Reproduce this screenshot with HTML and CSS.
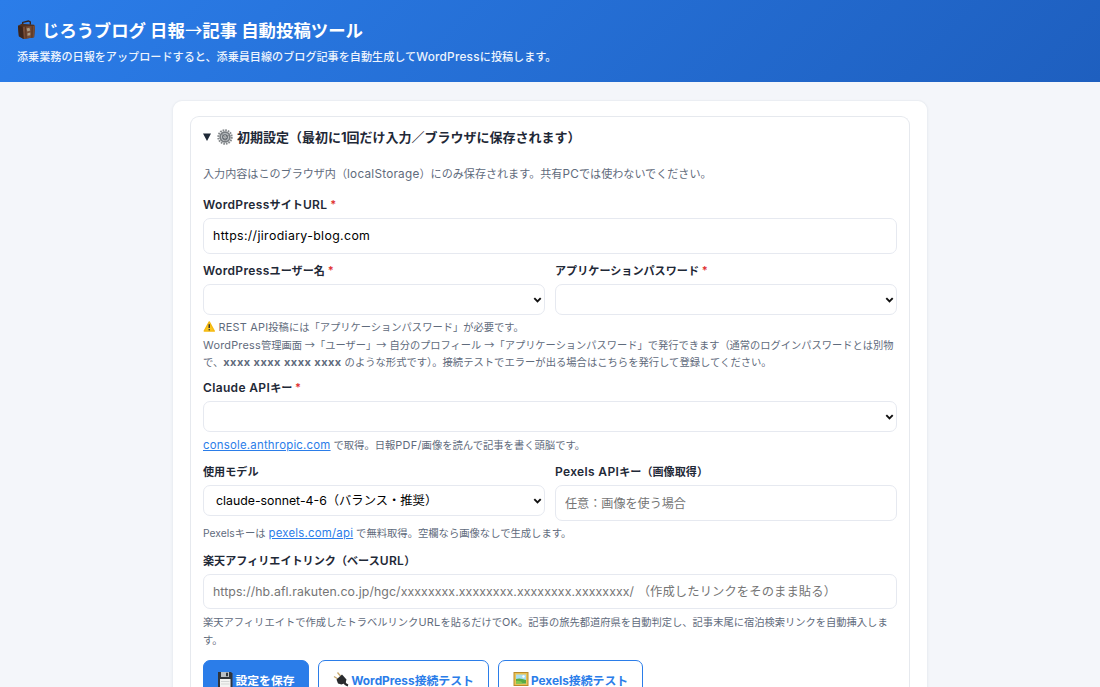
FILE: index.html
```html
<!DOCTYPE html>
<html lang="ja">
<head>
<meta charset="utf-8">
<title>じろうブログ 日報→記事 自動投稿ツール</title>
<link rel="stylesheet" href="styles.css">
</head>
<body>
<header class="header">
  <h1 class="title">
    <svg class="icon-bag" viewBox="0 0 20 22"><path d="M6 5V2.500L12 1l2 1v3" fill="none" stroke="#35211a" stroke-width="1.400"/><path d="M1 6l4-2 13 1 1 2-1 11-11 2-5-3z" fill="#50301f"/><path d="M6 7l13-1-1 12-11 2z" fill="#754a35"/><path d="M1 6l5 1 1 13-5-3z" fill="#3b241b"/><path d="M9 7l.6 12M16 6.500l-.3 12" stroke="#50301f" stroke-width="1"/><path d="M10 9l3-1 1 3-3 1zM11 14l3-1v3l-3 .5z" fill="#a99a82"/></svg>
    <span>じろうブログ 日報<span class="arrow">→</span>記事 自動投稿ツール</span>
  </h1>
  <p class="subtitle">添乗業務の日報をアップロードすると、添乗員目線のブログ記事を自動生成して<span class="en">WordPress</span>に投稿します。</p>
</header>
<main class="card">
  <section class="settings">
    <h2 class="summary">
      <svg class="icon-tri" viewBox="0 0 8 8"><path d="M0 .5h8L4 8z" fill="#1f2937"/></svg>
      <svg class="icon-gear" viewBox="0 0 16 16"><circle cx="8" cy="8" r="6.700" fill="none" stroke="#85898c" stroke-width="2" stroke-dasharray="1.700 .93"/><circle cx="8" cy="8" r="4.900" fill="#b9bdc0" stroke="#777c80" stroke-width="1.600"/><circle cx="8" cy="8" r="2.300" fill="#d9dcdf" stroke="#565e65" stroke-width="1.100"/><path d="M8 8l-3.500-3M8 8l4-1.500M8 8v4" stroke="#777" stroke-width=".7"/></svg>
      <span>初期設定（最初に1回だけ入力／ブラウザに保存されます）</span>
    </h2>
    <p class="intro">入力内容はこのブラウザ内（<span class="en">localStorage</span>）にのみ保存されます。共有<span class="en">PC</span>では使わないでください。</p>

    <div class="field">
      <label class="label"><span class="en">WordPress</span>サイト<span class="en">URL</span> <b class="req">*</b></label>
      <input class="input input-url" type="text" value="https://jirodiary-blog.com">
    </div>

    <div class="row row-users">
      <div class="field">
        <label class="label"><span class="en">WordPress</span>ユーザー名 <b class="req">*</b></label>
        <div class="select-box"><select class="select"><option></option></select><svg class="chevron" viewBox="0 0 8 6"><path d="M.8 1.200L4 4.500l3.200-3.300" /></svg></div>
      </div>
      <div class="field">
        <label class="label">アプリケーションパスワード <b class="req">*</b></label>
        <div class="select-box"><select class="select"><option></option></select><svg class="chevron" viewBox="0 0 8 6"><path d="M.8 1.200L4 4.500l3.200-3.300" /></svg></div>
      </div>
    </div>
    <p class="help help-rest"><span class="line line-note"><svg class="icon-warn" viewBox="0 0 13 12"><path d="M6.500 1L12 11H1z" fill="#fbc61d" stroke="#f5b912" stroke-width="1.500" stroke-linejoin="round"/><path d="M6.500 3.600v4" stroke="#333" stroke-width="1.600"/><circle cx="6.500" cy="9.500" r=".9" fill="#333"/></svg> <span class="en">REST API</span>投稿には「アプリケーションパスワード」が必要です。</span><span class="line line-path"><span class="en">WordPress</span>管理画面 <span class="arrow">→</span>「ユーザー」<span class="arrow">→</span> 自分のプロフィール <span class="arrow">→</span>「アプリケーションパスワード」で発行できます（通常のログインパスワードとは別物</span><span class="line">で、<b class="sample">xxxx xxxx xxxx xxxx</b> のような形式です）。接続テストでエラーが出る場合はこちらを発行して登録してください。</span></p>

    <div class="field">
      <label class="label"><span class="en">Claude API</span>キー <b class="req">*</b></label>
      <div class="select-box"><select class="select"><option></option></select><svg class="chevron" viewBox="0 0 8 6"><path d="M.8 1.200L4 4.500l3.200-3.300" /></svg></div>
    </div>
    <p class="help help-claude"><a class="link" href="#">console.anthropic.com</a> で取得。日報<span class="en">PDF/</span>画像を読んで記事を書く頭脳です。</p>

    <div class="row">
      <div class="field">
        <label class="label">使用モデル</label>
        <div class="select-box"><select class="select"><option>claude-sonnet-4-6（バランス・推奨）</option></select><svg class="chevron" viewBox="0 0 8 6"><path d="M.8 1.200L4 4.500l3.200-3.300" /></svg></div>
      </div>
      <div class="field">
        <label class="label"><span class="en">Pexels API</span>キー（画像取得）</label>
        <input class="input input-px" type="text" placeholder="任意：画像を使う場合">
      </div>
    </div>
    <p class="help help-pexels">Pexelsキーは <a class="link" href="#">pexels.com/api</a> で無料取得。空欄なら画像なしで生成します。</p>

    <div class="field">
      <label class="label">楽天アフィリエイトリンク（ベース<span class="en">URL</span>）</label>
      <input class="input input-rakuten" type="text" placeholder="https://hb.afl.rakuten.co.jp/hgc/xxxxxxxx.xxxxxxxx.xxxxxxxx.xxxxxxxx/ （作成したリンクをそのまま貼る）">
    </div>
    <p class="help help-rakuten"><span class="line line-rakuten">楽天アフィリエイトで作成したトラベルリンク<span class="en">URL</span>を貼るだけで<span class="en">OK</span>。記事の旅先都道府県を自動判定し、記事末尾に宿泊検索リンクを自動挿入しま</span><span class="line">す。</span></p>

    <div class="actions">
      <button class="btn btn-primary"><svg class="icon-btn" viewBox="0 0 16 16"><path d="M1 1h13l1.500 1.500V16H1z" fill="#30343a"/><path d="M4 1h8v5H4z" fill="#b9bec3"/><path d="M9 1.800h2v3.400H9z" fill="#34383d"/><path d="M3 8h10.500v8H3z" fill="#f4f4f2"/><path d="M4 10.500h8.500M4 13h8.500" stroke="#c6c9ca" stroke-width=".7"/></svg><span>設定を保存</span></button>
      <button class="btn btn-wp"><svg class="icon-btn" viewBox="0 0 16 16"><path d="M1 5.500l4 2.500M4.500 1.500L7.500 5" stroke="#c9a96c" stroke-width="1.300"/><path d="M3.500 8.500l5.500-5 4.500 5-1 3.500-4 1.500-3.500-1z" fill="#292b2e"/><path d="M11 11q1 2.500 4 3.500" stroke="#292b2e" stroke-width="2.200" fill="none"/></svg><span>WordPress接続テスト</span></button>
      <button class="btn btn-px"><svg class="icon-btn" viewBox="0 0 16 16"><path d="M.5 1h15v14H.5z" fill="#b98a2a"/><path d="M1.500 2h13v12h-13z" fill="#e9c255"/><path d="M3 3.500h10v9H3z" fill="#a8def0"/><path d="M3 8q4-1.500 10 1v3.500H3z" fill="#58ab45"/><path d="M3 10q5-1 7 2.500H3z" fill="#86c94d"/><circle cx="10.500" cy="5.500" r="1.200" fill="#fff"/></svg><span>Pexels接続テスト</span></button>
    </div>
  </section>
</main>
</body>
</html>
```
FILE: styles.css
```css
* { box-sizing: border-box; }
html { overflow: hidden; }
body {
  display: flex;
  flex-direction: column;
  margin: 0;
  height: 687px;
  overflow: hidden;
  background: #f4f6fa;
  color: #1f2937;
  font-family: Inter, "Noto Sans CJK JP", sans-serif;
  font-size: 11.4px;
  white-space: nowrap;
}
h1, h2, p { margin: 0; }
.en { font-size: 1.06em; letter-spacing: .25px; }
.arrow { font-family: "Noto Sans CJK JP", sans-serif; font-weight: 400; }

.header {
  flex: none;
  height: 82px;
  padding: 18px 17px 0;
  background: linear-gradient(135deg, #2b7de9, #1e5fbf);
  color: #fff;
}
.title { display: flex; align-items: center; gap: 6px; height: 24px; font-size: 17.4px; font-weight: 700; line-height: 24px; }
.icon-bag { width: 19px; height: 21px; }
.subtitle { margin-top: 6px; font-size: 11.120px; line-height: 18px; color: #edf4fd; font-weight: 500; }

.card {
  flex: 1;
  min-height: 0;
  width: 756px;
  margin: 18px auto 0;
  padding: 15px 17px 0;
  background: #fff;
  border: 1px solid #ebeef3;
  border-bottom: 0;
  border-radius: 10px 10px 0 0;
  box-shadow: 0 1px 3px rgba(30, 50, 80, .05);
  overflow: hidden;
}
.settings {
  height: 100%;
  padding: 9px 12px 0;
  border: 1px solid #e6e9ee;
  border-bottom: 0;
  border-radius: 9px 9px 0 0;
  overflow: hidden;
}
.summary { display: flex; align-items: center; height: 22px; font-size: 13px; line-height: 22px; font-weight: 700; }
.icon-tri { width: 8px; height: 8px; margin-right: 6px; }
.icon-gear { width: 16px; height: 16px; margin-right: 4px; }
.intro { margin: 17px 0 13px; height: 18px; font-size: 11.080px; line-height: 18px; color: #5f6b7c; }

.field { min-width: 0; }
.label { display: block; height: 22px; font-size: 11.100px; line-height: 18px; font-weight: 600; }
.label .en { font-size: 12px; letter-spacing: .35px; }
.req { color: #e03131; font-weight: 600; }
.input, .select {
  display: block;
  width: 100%;
  margin: 0;
  border: 1px solid #e6e9f0;
  border-radius: 7px;
  background: #fff;
  color: #000;
  font-family: inherit;
  font-size: 12.300px;
}
.input { height: 35.500px; padding: 0 9px; }
.input-url { letter-spacing: .37px; }
.input-px { font-size: 12.100px; }
.input-rakuten { letter-spacing: .1px; }
.input::placeholder { color: #757575; opacity: 1; }
.select { height: 31px; padding: 0 12px; appearance: none; }
.select-box { position: relative; }
.chevron { position: absolute; right: 3px; top: 13px; width: 9px; height: 6px; fill: none; stroke: #111; stroke-width: 1.900; }

.row { display: grid; grid-template-columns: 1fr 1fr; gap: 10px; }
.row-users { margin-top: 8.500px; }
.help { color: #5f6b7c; font-size: 10.320px; line-height: 17.800px; }
.line { display: block; height: 17.800px; }
.line-note { font-size: 10.270px; }
.line-path { font-size: 10.240px; }
.line-rakuten { font-size: 10.280px; }
.sample { font-size: 11px; letter-spacing: .45px; }
.icon-warn { width: 12.500px; height: 11px; vertical-align: -1.500px; }
.help-rest { height: 53.400px; margin: 3.500px 0 7.500px; }
.help-claude { height: 18px; margin: 4.500px 0 8.500px; }
.help-pexels { height: 18px; margin: 4px 0 9px; }
.help-rakuten { height: 35.500px; margin: 4.500px 0 10.500px; }
.link { color: #2b7de9; font-size: 11.400px; letter-spacing: .22px; text-decoration: underline; }

.actions { display: flex; gap: 9px; }
.btn {
  display: flex;
  align-items: center;
  justify-content: center;
  gap: 2px;
  height: 39px;
  padding: 0;
  border: 1px solid #2b7de9;
  border-radius: 7px;
  background: #fff;
  color: #2b7de9;
  font-family: inherit;
  font-size: 11.850px;
  font-weight: 700;
}
.btn-primary { width: 106px; background: #2b7de9; color: #fff; }
.btn-wp { width: 171px; }
.btn-px { width: 145px; }
.icon-btn { width: 16px; height: 16px; }
```
